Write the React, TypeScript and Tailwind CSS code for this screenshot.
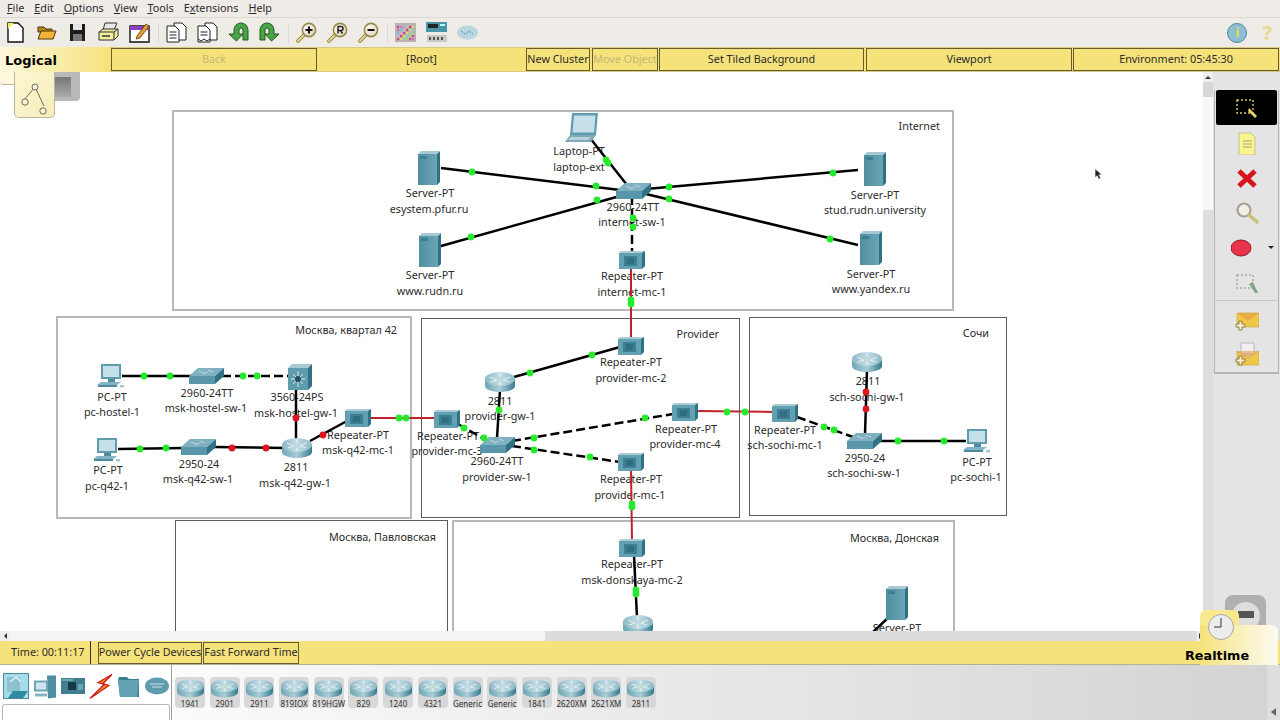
const FONT = "font-['Noto_Sans',sans-serif]";

type Dot = [number, number, "g" | "r"];
type Link = { p: number[]; red?: boolean; dash?: boolean; dots: Dot[] };

const links: Link[] = [
  { p: [590, 138, 627, 185], dots: [[606, 160, "g"], [608, 163, "g"]] },
  { p: [441, 168, 620, 190], dots: [[472, 172, "g"], [596, 186, "g"]] },
  { p: [441, 246, 620, 196], dots: [[471, 237, "g"], [597, 200, "g"]] },
  { p: [858, 170, 646, 189], dots: [[833, 173, "g"], [669, 187, "g"]] },
  { p: [858, 245, 646, 194], dots: [[830, 239, "g"], [669, 199, "g"]] },
  { p: [632, 196, 632, 252], dash: true, dots: [[633, 218, "g"], [633, 227, "g"]] },
  { p: [631, 266, 631, 338], red: true, dots: [[631, 300, "g"], [631, 304, "g"]] },
  { p: [122, 376, 192, 376], dots: [[144, 376, "g"], [170, 376, "g"]] },
  { p: [222, 376, 290, 376], dash: true, dots: [[243, 376, "g"], [257, 376, "g"]] },
  { p: [296, 388, 296, 440], dots: [[296, 418, "r"]] },
  { p: [118, 449, 184, 448], dots: [[140, 449, "g"], [166, 448, "g"]] },
  { p: [214, 447, 284, 448], dots: [[232, 448, "r"], [266, 448, "r"]] },
  { p: [310, 441, 347, 421], dots: [[323, 435, "r"]] },
  { p: [370, 418, 436, 418], red: true, dots: [[399, 418, "g"], [406, 418, "g"]] },
  { p: [458, 424, 484, 439], dash: true, dots: [[464, 428, "g"], [484, 438, "g"]] },
  { p: [500, 390, 497, 438], dots: [[499, 410, "g"]] },
  { p: [514, 377, 620, 347], dots: [[530, 373, "g"], [592, 355, "g"]] },
  { p: [512, 441, 673, 414], dash: true, dots: [[534, 438, "g"], [645, 418, "g"]] },
  { p: [512, 446, 620, 462], dash: true, dots: [[534, 450, "g"], [590, 457, "g"]] },
  { p: [696, 411, 774, 412], red: true, dots: [[727, 412, "g"], [745, 412, "g"]] },
  { p: [631, 469, 632, 541], red: true, dots: [[632, 504, "g"], [632, 507, "g"]] },
  { p: [634, 555, 637, 618], dots: [[636, 590, "g"], [636, 594, "g"]] },
  { p: [867, 370, 865, 435], dots: [[866, 392, "r"], [866, 409, "r"]] },
  { p: [797, 417, 853, 437], dash: true, dots: [[824, 427, "g"], [834, 430, "g"]] },
  { p: [880, 441, 966, 441], dots: [[898, 441, "g"], [944, 441, "g"]] },
  { p: [890, 616, 873, 632], dots: [] },
];

const labels: [string, number, number][] = [
  ["Laptop-PT", 579, 151], ["laptop-ext", 579, 167],
  ["Server-PT", 430, 193], ["esystem.pfur.ru", 429, 209],
  ["2960-24TT", 633, 207], ["internet-sw-1", 632, 222],
  ["Server-PT", 875, 195], ["stud.rudn.university", 875, 210],
  ["Server-PT", 430, 275], ["www.rudn.ru", 430, 291],
  ["Repeater-PT", 632, 276], ["internet-mc-1", 632, 292],
  ["Server-PT", 871, 274], ["www.yandex.ru", 871, 289],
  ["PC-PT", 112, 397], ["pc-hostel-1", 112, 412],
  ["2960-24TT", 207, 393], ["msk-hostel-sw-1", 206, 408],
  ["3560-24PS", 297, 397], ["msk-hostel-gw-1", 296, 413],
  ["Repeater-PT", 358, 435], ["msk-q42-mc-1", 358, 450],
  ["PC-PT", 108, 470], ["pc-q42-1", 107, 486],
  ["2950-24", 199, 464], ["msk-q42-sw-1", 198, 479],
  ["2811", 296, 467], ["msk-q42-gw-1", 295, 483],
  ["Repeater-PT", 448, 436], ["provider-mc-3", 447, 451],
  ["2811", 500, 401], ["provider-gw-1", 500, 416],
  ["Repeater-PT", 631, 362], ["provider-mc-2", 631, 378],
  ["Repeater-PT", 686, 429], ["provider-mc-4", 685, 444],
  ["2960-24TT", 497, 461], ["provider-sw-1", 497, 477],
  ["Repeater-PT", 631, 479], ["provider-mc-1", 630, 495],
  ["Repeater-PT", 785, 430], ["sch-sochi-mc-1", 785, 445],
  ["2811", 868, 381], ["sch-sochi-gw-1", 867, 397],
  ["2950-24", 865, 458], ["sch-sochi-sw-1", 864, 473],
  ["PC-PT", 977, 462], ["pc-sochi-1", 976, 477],
  ["Repeater-PT", 632, 564], ["msk-donskaya-mc-2", 632, 580],
  ["Server-PT", 897, 628],
];

type Cluster = { x: number; y: number; w: number; h: number; title: string; right: number; top: number; light?: boolean };

const clusters: Cluster[] = [
  { x: 172, y: 110, w: 782, h: 201, title: "Internet", right: 12, top: 9, light: true },
  { x: 56, y: 316, w: 356, h: 203, title: "Москва, квартал 42", right: 13, top: 7, light: true },
  { x: 421, y: 318, w: 319, h: 200, title: "Provider", right: 20, top: 10 },
  { x: 749, y: 317, w: 258, h: 199, title: "Сочи", right: 17, top: 10 },
  { x: 175, y: 520, w: 273, h: 140, title: "Москва, Павловская", right: 11, top: 11 },
  { x: 452, y: 520, w: 503, h: 140, title: "Москва, Донская", right: 14, top: 11, light: true },
];

const palette = ["1941", "2901", "2911", "819IOX", "819HGW", "829", "1240", "4321", "Generic", "Generic", "1841", "2620XM", "2621XM", "2811"];

const swatches = ["#e9a5c8", "#7fd8c8", "#e06cc0", "#c9487a", "#9fd86a", "#68c8e8", "#f0d060", "#d04890"];

function Router({ x, y, w = 30, h = 20 }: { x: number; y: number; w?: number; h?: number }) {
  return (
    <g transform={`translate(${x} ${y}) scale(${w / 30} ${h / 20})`}>
      <path d="M0 7v7c0 3.500 7 6 15 6s15-2.500 15-6V7z" fill="url(#routerSide)" />
      <ellipse cx="15" cy="7" rx="15" ry="7" fill="url(#routerTop)" />
      <path d="M5 5l6 2.500M25 5l-6 2.500M6 10l6-2M24 10l-6-2M15 1.500v3M15 13v-3" stroke="#fff" strokeWidth="0.9" fill="none" opacity="0.85" />
    </g>
  );
}

function SwitchBox({ x, y }: { x: number; y: number }) {
  return (
    <g transform={`translate(${x} ${y})`}>
      <path d="M9 0h26l-9 8H0z" fill="#7fb1c0" />
      <path d="M0 8h26v8H0z" fill="#5a96a9" />
      <path d="M26 8l9-8v8l-9 8z" fill="#2f7286" />
      <path d="M10 3l5 2M19 2l5 2M14 6l5-2" stroke="#d5e8ee" strokeWidth="0.7" />
    </g>
  );
}

function Server({ x, y }: { x: number; y: number }) {
  return (
    <g transform={`translate(${x} ${y})`}>
      <path d="M3 0h19l-3 3H0z" fill="#a6c9d3" />
      <path d="M0 3h19v31H0z" fill="url(#serverFront)" />
      <path d="M19 3l3-3v31l-3 3z" fill="#2f7286" />
      <path d="M2 5h7v3H2z" fill="#3d7f92" />
    </g>
  );
}

function Repeater({ x, y }: { x: number; y: number }) {
  return (
    <g transform={`translate(${x} ${y})`}>
      <path d="M2 0h24l-2 2H0z" fill="#a9ccd6" />
      <path d="M0 2h23v16H0z" fill="#62a0b2" />
      <path d="M23 2l3-2v15l-3 3z" fill="#2f7286" />
      <path d="M5 5h13v10H5z" fill="#3d7f92" />
      <path d="M8 8h7M8 10h7M8 12h7" stroke="#1f5566" strokeWidth="0.8" />
    </g>
  );
}

function Pc({ x, y }: { x: number; y: number }) {
  return (
    <g transform={`translate(${x} ${y})`}>
      <path d="M4 0h20v15H4z" fill="#5e9cae" />
      <path d="M6 2h16v11H6z" fill="#c6e0ea" />
      <path d="M11 15h7v3h-7z" fill="#4c8a9d" />
      <path d="M4 18h20l-4 3H0z" fill="#84b4c3" />
      <path d="M1 21h19v2H1z" fill="#4c8a9d" />
      <path d="M23 21h4v2.500h-4z" fill="#a7c7d1" />
    </g>
  );
}

function Laptop({ x, y }: { x: number; y: number }) {
  return (
    <g transform={`translate(${x} ${y})`}>
      <path d="M7 0h26l-2 22H5z" fill="#5e9cae" />
      <path d="M9 2.500h21.500l-1.500 17H7.500z" fill="#c6e0ea" />
      <path d="M5 22h26l-5 7H0z" fill="#7fa9b6" />
      <path d="M6 24h20l-3 3H3z" fill="#b9d3db" />
    </g>
  );
}

function Multilayer({ x, y }: { x: number; y: number }) {
  return (
    <g transform={`translate(${x} ${y})`}>
      <path d="M4 0h20l-4 4H0z" fill="#a6c9d3" />
      <path d="M0 4h20v22H0z" fill="#5e9cae" />
      <path d="M20 4l4-4v22l-4 4z" fill="#2f7286" />
      <path d="M10 7v5M10 18v5M3 15h5M12 15h5M5 10l3 3M15 10l-3 3M5 20l3-3M15 20l-3-3" stroke="#dcedf2" strokeWidth="1" />
      <circle cx="10" cy="15" r="3" fill="#23505f" />
    </g>
  );
}

function GradientDefs() {
  return (
    <svg className="absolute h-0 w-0">
      <defs>
        <linearGradient id="routerTop" x1="0" y1="0" x2="1" y2="0">
          <stop offset="0" stopColor="#8bb8c5" />
          <stop offset="0.5" stopColor="#c4dde4" />
          <stop offset="1" stopColor="#8bb8c5" />
        </linearGradient>
        <linearGradient id="routerSide" x1="0" y1="0" x2="1" y2="0">
          <stop offset="0" stopColor="#6ea6b6" />
          <stop offset="0.5" stopColor="#a9cdd7" />
          <stop offset="1" stopColor="#347a8e" />
        </linearGradient>
        <linearGradient id="serverFront" x1="0" y1="0" x2="1" y2="0">
          <stop offset="0" stopColor="#4f8ea1" />
          <stop offset="1" stopColor="#6ba5b6" />
        </linearGradient>
        <linearGradient id="lens" x1="0" y1="0" x2="1" y2="1">
          <stop offset="0" stopColor="#ffffff" />
          <stop offset="1" stopColor="#d9d4b8" />
        </linearGradient>
      </defs>
    </svg>
  );
}

function Topology() {
  return (
    <svg className="absolute left-0 top-0 h-[559px] w-[1203px]" viewBox="0 72 1203 559">
      {links.map((l, i) => (
        <line
          key={i}
          x1={l.p[0]}
          y1={l.p[1]}
          x2={l.p[2]}
          y2={l.p[3]}
          stroke={l.red ? "#c4202c" : "#000"}
          strokeWidth={l.red ? 2 : 2.5}
          strokeDasharray={l.dash ? "9 4" : undefined}
        />
      ))}
      <Laptop x={565} y={113} />
      <Server x={418} y={151} />
      <Server x={419} y={233} />
      <Server x={864} y={152} />
      <Server x={860} y={231} />
      <Server x={886} y={586} />
      <SwitchBox x={616} y={183} />
      <SwitchBox x={189} y={368} />
      <SwitchBox x={181} y={439} />
      <SwitchBox x={480} y={437} />
      <SwitchBox x={847} y={433} />
      <Repeater x={619} y={251} />
      <Repeater x={618} y={337} />
      <Repeater x={345} y={409} />
      <Repeater x={434} y={410} />
      <Repeater x={672} y={403} />
      <Repeater x={618} y={453} />
      <Repeater x={772} y={404} />
      <Repeater x={619} y={539} />
      <Pc x={97} y={364} />
      <Pc x={93} y={438} />
      <Pc x={963} y={429} />
      <Multilayer x={288} y={364} />
      <Router x={282} y={438} />
      <Router x={485} y={372} />
      <Router x={852} y={352} />
      <Router x={623} y={615} />
      {links.flatMap((l, i) =>
        l.dots.map((d, j) => (
          <circle key={`${i}-${j}`} cx={d[0]} cy={d[1]} r={3.4} fill={d[2] === "g" ? "#26ea2c" : "#de1420"} />
        )),
      )}
    </svg>
  );
}

function Magnifier({ mark }: { mark: string }) {
  return (
    <svg viewBox="0 0 21 21" className="h-[21px] w-[21px]">
      <path d="M9 12L2 19" stroke="#8a7a3c" strokeWidth="3.6" strokeLinecap="round" />
      <path d="M9 12L2 19" stroke="#e7d48a" strokeWidth="2" strokeLinecap="round" />
      <circle cx="13" cy="8" r="6.6" fill="url(#lens)" stroke="#9a8a4a" strokeWidth="1.6" />
      {mark === "+" && <path d="M9.500 8h7M13 4.500v7" stroke="#111" strokeWidth="2" />}
      {mark === "-" && <path d="M9.500 8h7" stroke="#111" strokeWidth="2" />}
      {mark === "R" && <path d="M11 11.500v-7h3a2 2 0 010 4h-3M13.500 8.500l2 3" stroke="#222" strokeWidth="1.500" fill="none" />}
    </svg>
  );
}

function ToolIcon({ name }: { name: string }) {
  if (name === "new")
    return (
      <svg viewBox="0 0 21 21" className="h-[21px] w-[21px]">
        <path d="M3 1h10l5 5v14H3z" fill="#fff" stroke="#111" strokeWidth="1.400" />
        <path d="M3 1h6L3 7z" fill="#f2ec5c" />
      </svg>
    );
  if (name === "open")
    return (
      <svg viewBox="0 0 21 21" className="h-[21px] w-[21px]">
        <path d="M2 5h6l2 2h6v3H2z" fill="#b8841c" stroke="#4a3408" />
        <path d="M2 17l3-8h15l-3 8z" fill="#f2b338" stroke="#4a3408" />
      </svg>
    );
  if (name === "save")
    return (
      <svg viewBox="0 0 21 21" className="h-[21px] w-[21px]">
        <path d="M3 2h15v17H3z" fill="#1c1c1c" />
        <path d="M6 2h9v6H6z" fill="#e4e4e4" />
        <path d="M6 12h9v7H6z" fill="#777" />
      </svg>
    );
  if (name === "print")
    return (
      <svg viewBox="0 0 21 21" className="h-[21px] w-[21px]">
        <path d="M7 1h12l-3 7H5z" fill="#e8e8e8" stroke="#333" />
        <path d="M1 10l4-3h15v7l-4 4H1z" fill="#f2ee9c" stroke="#333" />
        <path d="M1 10h15v8M16 10l4-3" fill="none" stroke="#333" />
        <path d="M4 14h8" stroke="#333" strokeWidth="1.500" />
      </svg>
    );
  if (name === "wizard")
    return (
      <svg viewBox="0 0 21 21" className="h-[21px] w-[21px]">
        <path d="M1 4h19v16H1z" fill="#fff" stroke="#111" strokeWidth="1.400" />
        <path d="M1 4h19v4H1z" fill="#8a3fc0" />
        <path d="M8 14l9-12 3 2-9 12-4 1z" fill="#e0a030" stroke="#6a3b08" strokeWidth="0.8" />
      </svg>
    );
  if (name === "copy" || name === "paste")
    return (
      <svg viewBox="0 0 21 21" className="h-[21px] w-[21px]">
        <path d="M8 1h8l4 4v13H8z" fill="#fff" stroke="#222" />
        <path d="M1 4h8l4 4v12H1z" fill="#fff" stroke="#222" />
        {name === "copy" ? (
          <path d="M3.500 10h7M3.500 13h7M3.500 16h7" stroke="#222" />
        ) : (
          <path d="M3.500 10h7M3.500 13h7M1 17l3 2 3-2 3 2 3-2" stroke="#222" fill="none" />
        )}
      </svg>
    );
  if (name === "undo" || name === "redo")
    return (
      <svg viewBox="0 0 21 21" className={`h-[21px] w-[21px] ${name === "redo" ? "-scale-x-100" : ""}`}>
        <path d="M6 12V8a7 7 0 0114 0v10h-5V8a2 2 0 00-4 0v4h4l-6.500 7L1 12z" fill="#4aa346" stroke="#1e5a1c" />
      </svg>
    );
  if (name === "palette")
    return (
      <svg viewBox="0 0 21 21" className="h-[21px] w-[21px]">
        <path d="M0 1h21v19H0z" fill="#b9b3b3" />
        {[5, 8, 11, 14, 17].flatMap((y) =>
          [2, 5, 8, 11, 14, 17].map((x) => (
            <rect key={`${x}-${y}`} x={x} y={y - 1} width="2.200" height="2.200" fill={swatches[(x + y) % swatches.length]} />
          )),
        )}
      </svg>
    );
  if (name === "device")
    return (
      <svg viewBox="0 0 21 21" className="h-[21px] w-[21px]">
        <path d="M0 0h21v10H0z" fill="#4a93a8" />
        <path d="M2 2h10v4H2z" fill="#222" />
        <path d="M14 2h5v2h-5z" fill="#bfe" />
        <path d="M1 13h20v7H1z" fill="#c8c8c8" />
        <path d="M3 15h2v3H3zM7 15h2v3H7zM11 15h2v3h-2zM15 15h2v3h-2z" fill="#555" />
      </svg>
    );
  if (name === "cloud")
    return (
      <svg viewBox="0 0 21 21" className="h-[21px] w-[21px]">
        <ellipse cx="10.500" cy="10.500" rx="10.500" ry="7" fill="#b7d6df" />
        <path d="M4 9l4 3 4-3 4 3" stroke="#4f8ea1" fill="none" strokeDasharray="2 1.500" />
      </svg>
    );
  return <Magnifier mark={name} />;
}

function ToolGroup({ items }: { items: string[] }) {
  return (
    <div className="flex gap-[10px]">
      {items.map((n) => (
        <ToolIcon key={n} name={n} />
      ))}
    </div>
  );
}

const Sep = () => <div className="h-[20px] w-px bg-[#dcd8d2]" />;

function Menu() {
  const items = [
    ["F", "ile"], ["E", "dit"], ["O", "ptions"], ["V", "iew"], ["T", "ools"], ["E", "xtensions"], ["H", "elp"],
  ];
  return (
    <div className="flex h-[18px] items-center gap-[10px] border-b border-[#dcd8d2] bg-[#efebe7] pl-[7px] text-[10.800px] text-[#2b2b2b]">
      {items.map(([a, b], i) => (
        <span key={i}>
          {i === 5 ? <>E<u>x</u>tensions</> : <><u>{a}</u>{b}</>}
        </span>
      ))}
    </div>
  );
}

function Toolbar() {
  return (
    <div className="flex h-[29px] items-center gap-[7.500px] bg-[#efebe7] pl-[5px]">
      <ToolGroup items={["new", "open", "save", "print", "wizard"]} />
      <Sep />
      <ToolGroup items={["copy", "paste", "undo", "redo"]} />
      <Sep />
      <ToolGroup items={["+", "R", "-"]} />
      <Sep />
      <ToolGroup items={["palette", "device", "cloud"]} />
      <div className="ml-auto flex items-center gap-[15px] pr-[8px]">
        <div className="flex h-[20px] w-[20px] items-center justify-center rounded-full border border-[#4d8aa0] bg-[#8dbfd1] text-[13px] font-bold leading-none text-[#e8e05a]">i</div>
        <span className="text-[20px] font-bold leading-none text-[#e3d98a]">?</span>
      </div>
    </div>
  );
}

function YellowButton({ w, children, muted, plain }: { w: string; children: string; muted?: boolean; plain?: boolean }) {
  return (
    <div
      className={`${w} flex h-[23px] items-center justify-center whitespace-nowrap pb-[1px] text-[10.800px] ${plain ? "" : "border border-[#665c30]"} ${muted ? "text-[#c4b875]" : "text-[#2b2b2b]"}`}
    >
      {children}
    </div>
  );
}

function TopBar() {
  return (
    <div className="flex h-[25px] items-center border-y border-[#d6c980] bg-[#f6e27a] pl-[111px] pr-[1px]">
      <YellowButton w="w-[206px]" muted>Back</YellowButton>
      <YellowButton w="w-[209px]" plain>[Root]</YellowButton>
      <YellowButton w="w-[64px]">New Cluster</YellowButton>
      <div className="w-[2px]" />
      <YellowButton w="w-[66px]" muted>Move Object</YellowButton>
      <div className="w-[1px]" />
      <YellowButton w="w-[205px]">Set Tiled Background</YellowButton>
      <div className="w-[2px]" />
      <YellowButton w="w-[206px]">Viewport</YellowButton>
      <div className="w-[1px]" />
      <YellowButton w="w-[206px]">Environment: 05:45:30</YellowButton>
    </div>
  );
}

function Canvas() {
  return (
    <div className="relative h-[559px] w-[1203px] overflow-hidden bg-white text-[10.800px] leading-none text-[#2b2b2b]">
      {clusters.map((c) => (
        <div
          key={c.title}
          className={`absolute ${c.light ? "border-2 border-[#b8b8b8]" : "border border-[#5c5c5e]"}`}
          style={{ left: c.x, top: c.y - 72, width: c.w, height: c.h }}
        >
          <span className="absolute whitespace-nowrap" style={{ right: c.right, top: c.top }}>{c.title}</span>
        </div>
      ))}
      {labels.map(([t, x, y], i) => (
        <span
          key={i}
          className="absolute -translate-x-1/2 -translate-y-1/2 whitespace-nowrap"
          style={{ left: x, top: y - 72 }}
        >
          {t}
        </span>
      ))}
      <Topology />
      {/* mouse pointer */}
      <svg viewBox="0 0 10 14" className="absolute left-[1094px] top-[96px] h-[12px] w-[9px]">
        <path d="M1 1v10l2.500-2 2 4 2-1-2-4H9z" fill="#222" stroke="#fff" strokeWidth="0.6" />
      </svg>
    </div>
  );
}

function SideIcon({ name }: { name: string }) {
  const cls = "h-[24px] w-[24px]";
  if (name === "select" || name === "resize") {
    const sel = name === "select";
    return (
      <svg viewBox="0 0 24 24" className={cls}>
        <path d="M2 4h16v13H2z" fill="none" stroke={sel ? "#d9c96a" : "#9cb39c"} strokeWidth="1.400" strokeDasharray="2 2" />
        <path d={sel ? "M14 12l8 8-2 2-7-7z" : "M14 13l6 9h3l-5-11z"} fill={sel ? "#e4d268" : "#7fa58a"} />
      </svg>
    );
  }
  if (name === "note")
    return (
      <svg viewBox="0 0 24 24" className={cls}>
        <path d="M4 2h12l4 4v18H4z" fill="#f8f48e" stroke="#c2bf94" />
        <path d="M8 10h9M8 13h9M8 16h9" stroke="#a8a67a" />
      </svg>
    );
  if (name === "delete")
    return (
      <svg viewBox="0 0 24 24" className={cls}>
        <path d="M4 5l16 15M20 5L4 20" stroke="#d8141c" strokeWidth="5" />
      </svg>
    );
  if (name === "inspect")
    return (
      <svg viewBox="0 0 24 24" className={cls}>
        <circle cx="9" cy="9" r="6.500" fill="#f1efe8" stroke="#a9a094" strokeWidth="2.200" />
        <path d="M14 14l8 7" stroke="#c8c078" strokeWidth="3.500" strokeLinecap="round" />
      </svg>
    );
  if (name === "ellipse")
    return (
      <svg viewBox="0 0 24 24" className={cls}>
        <ellipse cx="10" cy="12" rx="10" ry="8" fill="#e8344a" stroke="#8c1a28" />
      </svg>
    );
  return (
    <svg viewBox="0 0 24 24" className={cls}>
      {name === "open" && <path d="M6 1h13v11H6z" fill="#f0f0f0" stroke="#b8b8b8" />}
      <path d={name === "open" ? "M2 9l11 7 11-7v14H2z" : "M2 6h22v14H2z"} fill="#f0c848" stroke="#c9a23a" strokeWidth="0.600" />
      <path d={name === "open" ? "M2 9l11 7 11-7" : "M2 6l11 8 11-8"} fill="#e49a48" opacity="0.6" />
      <path d="M4 14v3H1v3h3v3h3v-3h3v-3H7v-3z" fill="#f4ecc8" stroke="#7a6a3a" strokeWidth="0.800" />
    </svg>
  );
}

function SidePanel() {
  const slot = "flex h-[35px] items-center justify-center";
  return (
    <div className="h-[559px] w-[67px] bg-[#e4e4e4] pl-[1px] pr-[1px] pt-[18px]">
      <div className="h-[284px] border-x border-b-2 border-[#b4b4b4] px-[1px]">
        <div className={`${slot} rounded-[2px] bg-black`}>
          <SideIcon name="select" />
        </div>
        <div className={slot}><SideIcon name="note" /></div>
        <div className={slot}><SideIcon name="delete" /></div>
        <div className={slot}><SideIcon name="inspect" /></div>
        <div className={`${slot} relative pr-[7px]`}>
          <SideIcon name="ellipse" />
          <span className="absolute right-[3px] top-[16px] h-0 w-0 border-x-[3px] border-t-[3px] border-x-transparent border-t-[#222]" />
        </div>
        <div className={slot}><SideIcon name="resize" /></div>
        <div className="h-px bg-[#c8c8c8]" />
        <div className={slot}><SideIcon name="closed" /></div>
        <div className={slot}><SideIcon name="open" /></div>
      </div>
    </div>
  );
}

function VScrollbar() {
  return (
    <div className="flex h-[559px] w-[10px] flex-col bg-[#dedede]">
      <div className="flex h-[10px] items-center justify-center bg-[#eeeeee]">
        <span className="h-0 w-0 border-x-[3px] border-b-[3px] border-x-transparent border-b-[#333]" />
      </div>
      <div className="h-[15px] bg-[#d8d8d8]" />
      <div className="h-[113px] bg-[#f7f7f7]" />
    </div>
  );
}

function HScrollbar() {
  return (
    <div className="flex h-[10px] w-[1203px] items-center bg-[#dcdcdc]">
      <div className="flex h-[10px] w-[10px] items-center justify-center bg-[#eeeeee]">
        <span className="h-0 w-0 border-y-[3px] border-r-[3px] border-y-transparent border-r-[#333]" />
      </div>
      <div className="h-[10px] w-[535px] bg-[#f4f4f4]" />
      <div className="ml-auto flex h-[10px] w-[6px] items-center justify-center bg-[#eeeeee]">
        <span className="h-0 w-0 border-y-[3px] border-l-[3px] border-y-transparent border-l-[#333]" />
      </div>
    </div>
  );
}

function StatusBar() {
  return (
    <div className="flex h-[24px] items-center border-b border-[#b8b190] bg-[#f6e27a] text-[10.800px] text-[#2b2b2b]">
      <div className="flex h-[23px] w-[91px] items-center border-r border-[#333] pl-[11px]">Time: 00:11:17</div>
      <div className="ml-[7px] flex h-[22px] w-[104px] items-center justify-center whitespace-nowrap border border-[#665c30]">Power Cycle Devices</div>
      <div className="ml-[1px] flex h-[22px] w-[96px] items-center justify-center whitespace-nowrap border border-[#665c30]">Fast Forward Time</div>
    </div>
  );
}

function CategoryIcons() {
  return (
    <div className="flex h-[36px] items-center gap-[4px] pl-[3px]">
      <div className="flex h-[26px] w-[26px] items-center justify-center border border-[#4d8aa0] bg-[#a5dce8]">
        <svg viewBox="0 0 24 24" className="h-[24px] w-[24px]">
          <path d="M3 3h13v15H3z" fill="#8cc1d0" />
          <path d="M6 8l6-5 5 5" stroke="#e4f1f5" strokeWidth="1.500" fill="none" />
          <path d="M4 24l5-7h15l-5 7z" fill="#2f8ba0" />
        </svg>
      </div>
      <svg viewBox="0 0 24 24" className="h-[25px] w-[24px]">
        <path d="M14 1h9v22l-8 1z" fill="#4f8ea1" />
        <path d="M1 6h14v11H1z" fill="#6da6b7" />
        <path d="M3 8h10v7H3z" fill="#cfe4ec" />
        <path d="M2 19h12v3H2z" fill="#84b4c3" />
      </svg>
      <svg viewBox="0 0 24 24" className="h-[24px] w-[24px]">
        <path d="M0 4h24v16H0z" fill="#3f7f90" />
        <path d="M7 8h8v8H7z" fill="#153a45" />
        <path d="M1 5h11v2H1zM17 10h5v6h-5z" fill="#6aa5b4" />
      </svg>
      <svg viewBox="0 0 24 24" className="h-[25px] w-[24px]">
        <path d="M23 0L9 8l6 2L1 24l19-13-6-2z" fill="#f08a20" stroke="#c81818" strokeWidth="1.200" />
      </svg>
      <svg viewBox="0 0 24 24" className="h-[24px] w-[24px]">
        <path d="M1 6l1-3h8l2 2h10v18H3z" fill="#3b7f92" />
        <path d="M1 6h18l3 0-2 17H3z" fill="#62a0b2" />
      </svg>
      <svg viewBox="0 0 24 24" className="h-[24px] w-[24px]">
        <ellipse cx="12" cy="12" rx="12" ry="8.500" fill="#5e9cae" />
        <path d="M5 10h14M7 13h10" stroke="#cfe4ec" />
      </svg>
    </div>
  );
}

function Tile({ label }: { label: string }) {
  return (
    <div className="flex h-[31px] w-[30px] flex-col items-center rounded-[4px] bg-[#d8d8d8] pt-[2px] text-[8px] leading-[9px] text-[#333]">
      <svg viewBox="0 0 30 20" className="h-[19px] w-[27px]">
        <Router x={0} y={0} />
      </svg>
      <span className="mt-[1px] whitespace-nowrap">{label}</span>
    </div>
  );
}

function BottomPanel() {
  return (
    <div className="flex h-[55px] bg-white">
      <div className="w-[172px] shrink-0 border-r border-[#9a9a9a] pt-[3px]">
        <CategoryIcons />
        <div className="ml-[2px] h-[20px] w-[168px] rounded-t-[3px] border border-b-0 border-[#b8b8b8]" />
      </div>
      <div className="flex flex-1 gap-[4.700px] bg-gradient-to-r from-[#fbfbfb] to-[#d4d4d4] pl-[3px] pt-[12px]">
        {palette.map((p, i) => (
          <Tile key={i} label={p} />
        ))}
      </div>
      <div className="flex w-[13px] items-end justify-center bg-[#dedede] pb-[4px]">
        <span className="h-0 w-0 border-y-[4px] border-r-[5px] border-y-transparent border-r-[#666]" />
      </div>
    </div>
  );
}

function LogicalTab() {
  return (
    <>
      <div className="absolute left-0 top-[47px] h-[25px] w-[110px] bg-gradient-to-r from-[#fdf8dc] to-[#f6e27a]">
        <span className="absolute left-[5px] top-[5px] font-['DejaVu_Sans',sans-serif] text-[13px] font-bold leading-[17px] text-black">Logical</span>
      </div>
      <div className="absolute left-[40px] top-[72px] h-[29px] w-[40px] rounded-b-[4px] bg-[#b9b9b9]">
        <div className="ml-[13px] mt-[5px] h-[20px] w-[18px] bg-gradient-to-b from-[#777] to-[#aaa]" />
      </div>
      <div className="absolute left-0 top-[72px] h-[13px] w-[16px] rounded-bl-[3px] border-b border-[#bcb59a] bg-[#fdf8dc]" />
      <div className="absolute left-[14px] top-[72px] h-[46px] w-[41px] rounded-b-[5px] border border-t-0 border-[#bcb59a] bg-gradient-to-br from-[#fdf6d0] to-[#f6eebc]">
        <svg viewBox="0 0 41 46" className="h-[46px] w-[41px]">
          <path d="M20 15l-11 13M20 15l9 19" stroke="#333" strokeWidth="0.700" />
          <circle cx="20" cy="15" r="3" fill="#f8f3d0" stroke="#333" strokeWidth="0.700" />
          <circle cx="10" cy="30" r="3.200" fill="#f8f3d0" stroke="#333" strokeWidth="0.700" />
          <circle cx="28" cy="39" r="3.200" fill="#f8f3d0" stroke="#333" strokeWidth="0.700" />
        </svg>
      </div>
    </>
  );
}

function RealtimeTab() {
  return (
    <>
      <div className="absolute left-[1225px] top-[595px] h-[40px] w-[41px] rounded-[8px] bg-[#b0b0b0]">
        <div className="ml-[7px] mt-[7px] h-[28px] w-[28px] rounded-full bg-[#dedede]" />
        <div className="absolute left-[13px] top-[16px] h-[7px] w-[16px] bg-[#555]" />
      </div>
      <div className="absolute left-[1200px] top-[610px] h-[55px] w-[39px] rounded-t-[6px] bg-[#f8e98f]" />
      <div className="absolute left-[1200px] top-[625px] h-[40px] w-[78px] rounded-tr-[6px] bg-gradient-to-r from-[#f6e27a] to-[#fdfaf0]" />
      <div className="absolute left-[1208px] top-[614px] flex h-[26px] w-[26px] items-center justify-center rounded-full border border-[#a8a8a8] bg-[#ececec]">
        <svg viewBox="0 0 24 24" className="h-[24px] w-[24px]">
          <path d="M12 3v9H5" stroke="#333" strokeWidth="1" fill="none" />
        </svg>
      </div>
      <span className="absolute left-[1185px] top-[648px] font-['DejaVu_Sans',sans-serif] text-[12.800px] font-bold leading-[16px] text-black">Realtime</span>
    </>
  );
}

export default function App() {
  return (
    <div className={`relative flex h-[720px] w-[1280px] flex-col overflow-hidden bg-[#efebe7] ${FONT}`}>
      <GradientDefs />
      <Menu />
      <Toolbar />
      <TopBar />
      <div className="flex h-[559px]">
        <Canvas />
        <VScrollbar />
        <SidePanel />
      </div>
      <div className="flex h-[10px] bg-[#dedede]">
        <HScrollbar />
      </div>
      <StatusBar />
      <BottomPanel />
      <LogicalTab />
      <RealtimeTab />
    </div>
  );
}
